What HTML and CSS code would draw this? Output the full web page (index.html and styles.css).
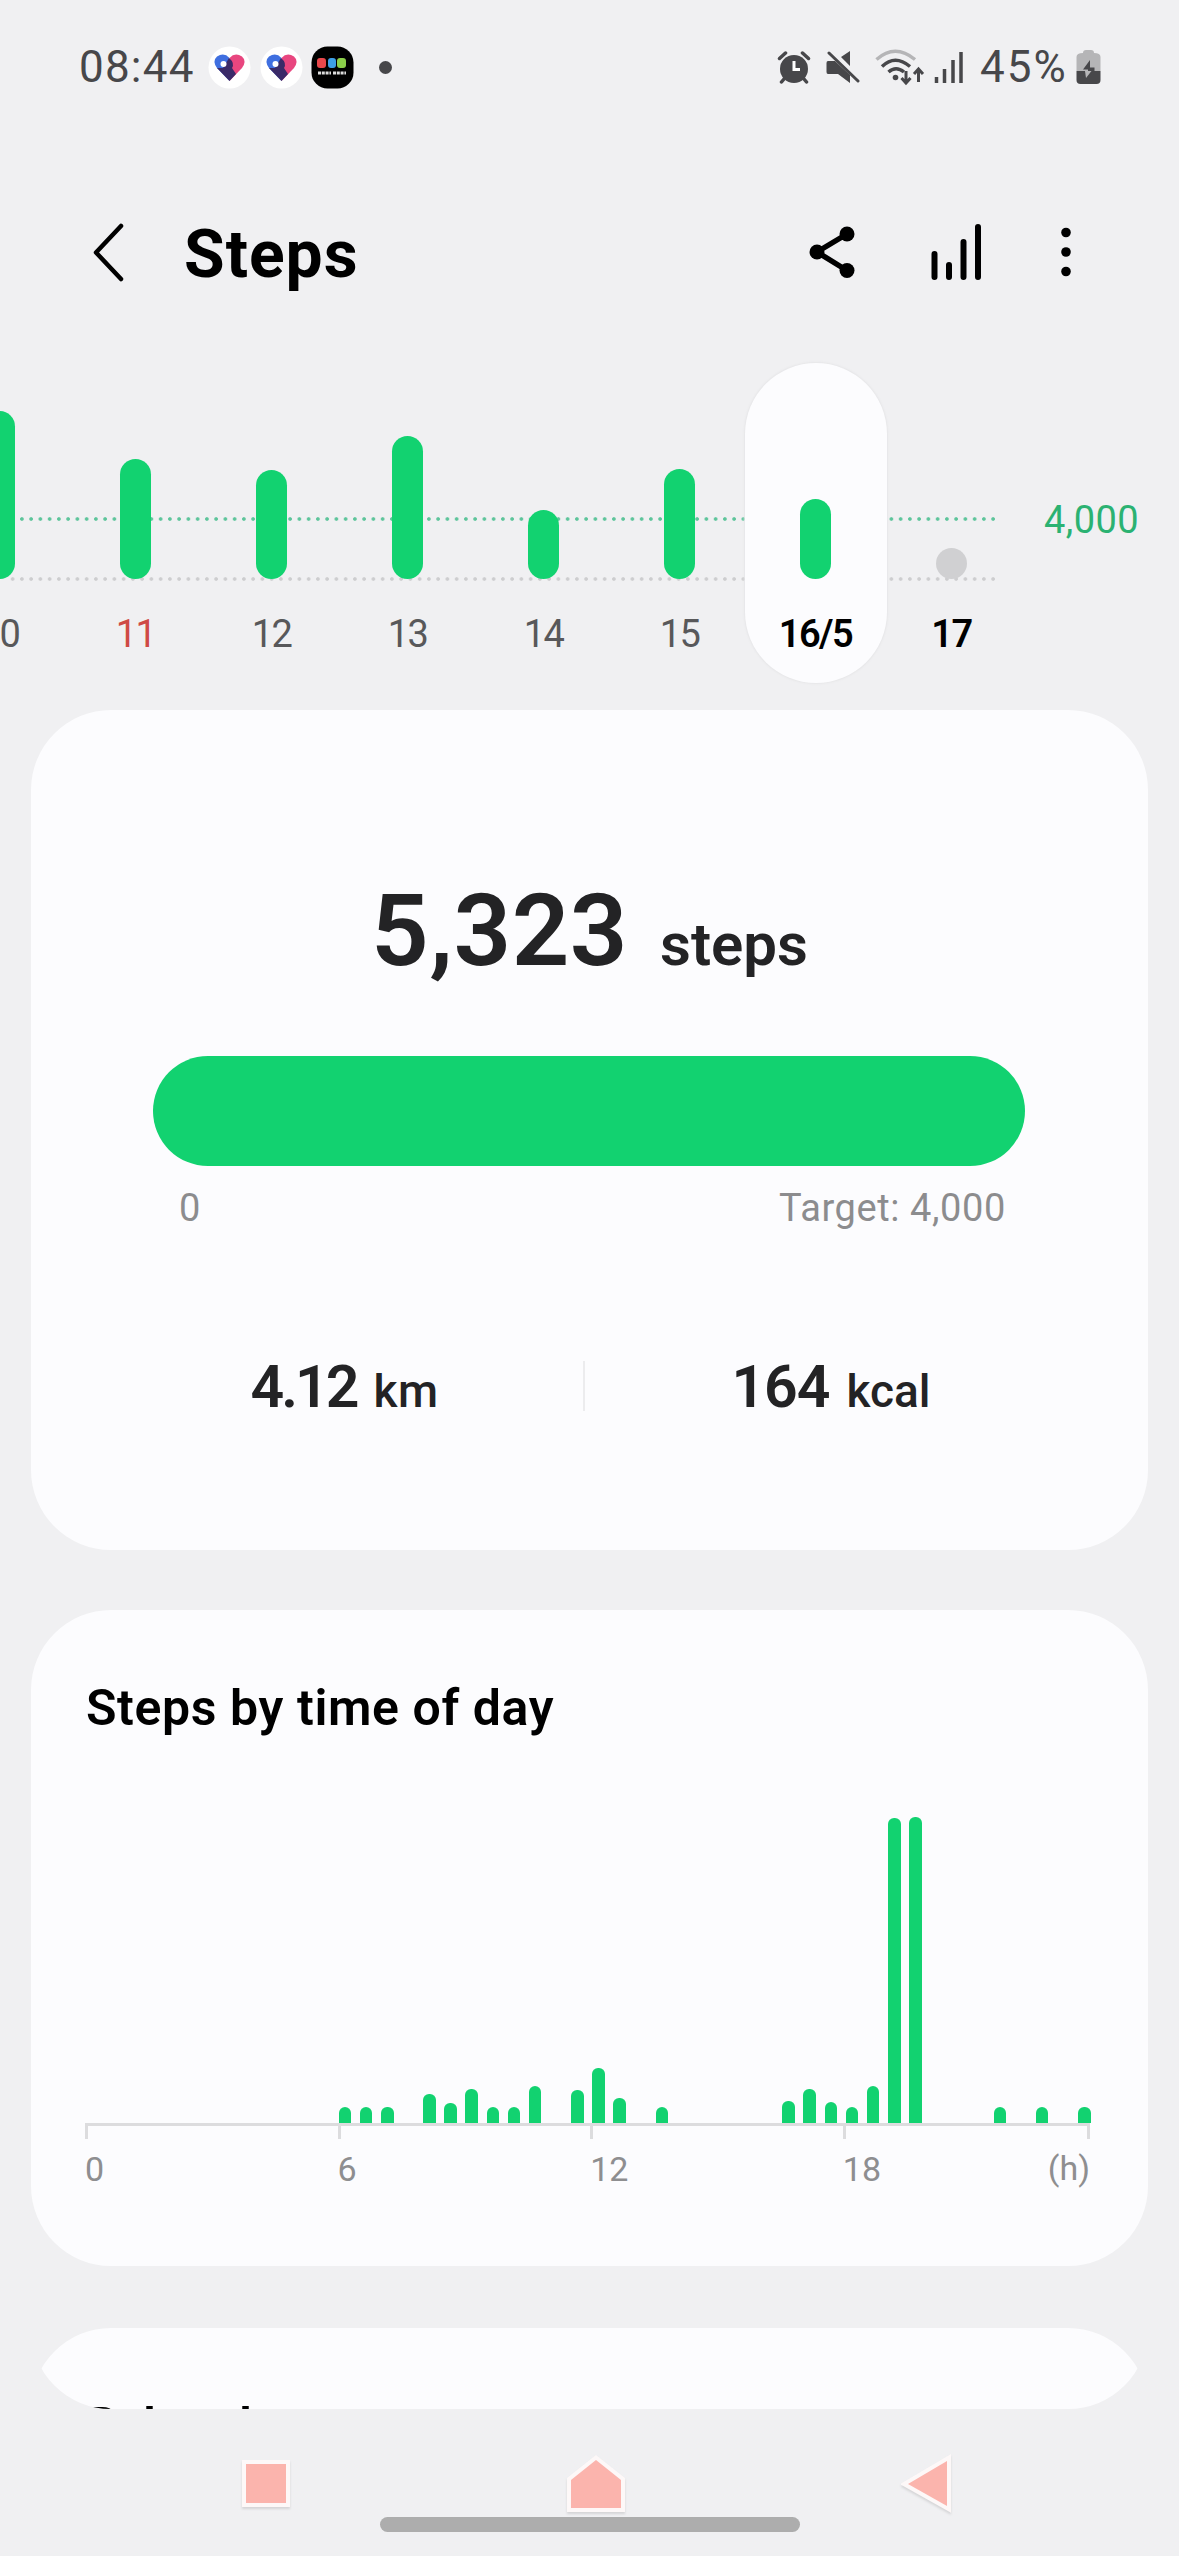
FILE: index.html
```html
<!DOCTYPE html>

<html lang="en">
	<head>
		<meta charset="utf-8" />
		<title>Steps</title>
		<link rel="stylesheet" href="styles.css">
	</head>

	<body>
		<div id="status">
			<span class="clock">08:44</span>
			<svg class="app" width="43" height="43" viewBox="0 0 43 43">
				<circle cx="21.5" cy="21.5" r="21" fill="#fff" />
				<path d="M21.500 35L9 22Q4 15 9 10.500Q16 6 21.500 12V35Z" fill="#3f6fe0" />
				<path d="M21.500 35L34 22Q39 15 34 10.500Q27 6 21.500 12V35Z" fill="#e8467f" />
				<path d="M9 22L15 22L21 12Q27 17 24 22L28 28L21.500 35Z" fill="#3a2a68" />
				<circle cx="15.5" cy="18" r="3" fill="#fff" />
			</svg>
			<svg class="app" width="43" height="43" viewBox="0 0 43 43">
				<circle cx="21.5" cy="21.5" r="21" fill="#fff" />
				<path d="M21.500 35L9 22Q4 15 9 10.500Q16 6 21.500 12V35Z" fill="#3f6fe0" />
				<path d="M21.500 35L34 22Q39 15 34 10.500Q27 6 21.500 12V35Z" fill="#e8467f" />
				<path d="M9 22L15 22L21 12Q27 17 24 22L28 28L21.500 35Z" fill="#3a2a68" />
				<circle cx="15.5" cy="18" r="3" fill="#fff" />
			</svg>
			<svg class="app" width="43" height="43" viewBox="0 0 43 43">
				<rect x="0.5" y="0.5" width="42" height="42" rx="16" fill="#000" />
				<rect x="6" y="12" width="9" height="10" rx="3" fill="#e8474b" />
				<rect x="17" y="12" width="8" height="10" rx="3" fill="#3d9fe6" />
				<rect x="26" y="12" width="9" height="10" rx="3" fill="#8bcf4a" />
				<path d="M7 27H20M22 27H35" stroke="#ddd" stroke-width="3" stroke-dasharray="3 0.800" />
			</svg>
			<span class="dot"></span>

			<div class="system">
				<svg width="34" height="34" viewBox="0 0 34 34">
					<circle cx="17" cy="19" r="14" fill="#47474a" />
					<path d="M2.500 8.500L8.500 3M25.500 3L31.500 8.500M7 29L4.500 32M27 29L29.500 32" stroke="#47474a" stroke-width="3.500" stroke-linecap="round" />
					<path d="M17 11V19.500H23" stroke="#fff" stroke-width="3" fill="none" />
				</svg>
				<svg class="mute" width="34" height="34" viewBox="0 0 34 34">
					<path d="M2 11H9L24 25V33L12 24H2Q0.500 24 0.500 22V13Q0.500 11 2 11ZM15 7L24 1V16Z" fill="#47474a" />
					<path d="M3 3L32 31" stroke="#47474a" stroke-width="3" stroke-linecap="round" />
				</svg>
				<svg class="wifi" width="50" height="38" viewBox="0 0 50 38">
					<g fill="none" stroke-width="3.500">
						<path d="M1.500 11.500Q20 -5 40 11.500" stroke="#b5b5b7" />
						<path d="M7 18.500Q20 6 35 18.500M13.500 24Q21 17.500 29 24" stroke="#47474a" />
						<path d="M31 23V34M26.500 30L31 35L35.500 30M43.500 34V21M39 26L43.500 21L48 26" stroke="#47474a" stroke-width="3" />
					</g>
					<circle cx="20.5" cy="29.5" r="2.800" fill="#47474a" />
				</svg>
				<svg class="signal" width="30" height="34" viewBox="0 0 30 34">
					<path d="M2.500 27V33M10.500 19V33M19 10V33M27 2V33" stroke="#47474a" stroke-width="3.500" />
				</svg>
				<span class="percent">45%</span>
				<svg class="battery" width="25" height="36" viewBox="0 0 25 36">
					<path d="M7 4Q7 1 10 1H15Q18 1 18 4Q24.500 4 24.500 8V22H0.500V8Q0.500 4 7 4Z" fill="#b5b5b7" />
					<path d="M0.500 22H24.500V31Q24.500 35 20.500 35H4.500Q0.500 35 0.500 31Z" fill="#47474a" />
					<path d="M14 11L7 20.500H12V22H18.500V18.500H14Z" fill="#47474a" />
					<path d="M10 29L15.500 22H9Z" fill="#b5b5b7" />
				</svg>
			</div>
		</div>

		<header>
			<svg width="32" height="62" viewBox="0 0 32 62">
				<path d="M29 5L4 31.500L29 58" fill="none" stroke="#000" stroke-width="4.500" stroke-linecap="round" stroke-linejoin="round" />
			</svg>
			<h1>Steps</h1>
			<svg class="share" width="48" height="54" viewBox="0 0 48 54">
				<path d="M39 9L9 27L39 45.500" fill="none" stroke="#000" stroke-width="5.500" />
				<circle cx="39" cy="9" r="7.500" />
				<circle cx="9" cy="27" r="7.500" />
				<circle cx="39" cy="45.500" r="7.500" />
			</svg>
			<svg class="trend" width="52" height="60" viewBox="0 0 52 60">
				<path d="M4.500 32V55M19 43V55M33.500 20V55M48 5V55" stroke="#000" stroke-width="6" stroke-linecap="round" />
			</svg>
			<svg class="more" width="12" height="50" viewBox="0 0 12 50">
				<circle cx="6" cy="5.500" r="4.800" />
				<circle cx="6" cy="25" r="4.800" />
				<circle cx="6" cy="44.500" r="4.800" />
			</svg>
		</header>

		<div id="week">
			<div class="line target"></div>
			<div class="line base"></div>
			<div class="day"><div class="bar" style="height: 168px"></div><p>10</p></div>
			<div class="day sunday"><div class="bar" style="height: 120px"></div><p>11</p></div>
			<div class="day"><div class="bar" style="height: 109px"></div><p>12</p></div>
			<div class="day"><div class="bar" style="height: 143px"></div><p>13</p></div>
			<div class="day"><div class="bar" style="height: 69px"></div><p>14</p></div>
			<div class="day"><div class="bar" style="height: 110px"></div><p>15</p></div>
			<div class="day selected"><div class="bar" style="height: 80px"></div><p>16/5</p></div>
			<div class="day today"><div class="bar empty" style="height: 31px"></div><p>17</p></div>
			<span class="goal">4,000</span>
		</div>

		<main>
			<section class="summary">
				<div class="count"><b>5,323</b><span>steps</span></div>
				<div class="progress"></div>
				<div class="range"><span>0</span><span>Target: 4,000</span></div>
				<div class="stats">
					<div class="km"><b>4.12</b><span>km</span></div>
					<div class="kcal"><b>164</b><span>kcal</span></div>
				</div>
			</section>

			<section class="hours">
				<h2>Steps by time of day</h2>
				<!-- one column for each half hour -->
				<div class="plot">
					<i style="grid-column: 13; height: 16px"></i>
					<i style="grid-column: 14; height: 16px"></i>
					<i style="grid-column: 15; height: 16px"></i>
					<i style="grid-column: 17; height: 29px"></i>
					<i style="grid-column: 18; height: 20px"></i>
					<i style="grid-column: 19; height: 34px"></i>
					<i style="grid-column: 20; height: 16px"></i>
					<i style="grid-column: 21; height: 16px"></i>
					<i style="grid-column: 22; height: 37px"></i>
					<i style="grid-column: 24; height: 33px"></i>
					<i style="grid-column: 25; height: 55px"></i>
					<i style="grid-column: 26; height: 25px"></i>
					<i style="grid-column: 28; height: 16px"></i>
					<i style="grid-column: 34; height: 22px"></i>
					<i style="grid-column: 35; height: 34px"></i>
					<i style="grid-column: 36; height: 21px"></i>
					<i style="grid-column: 37; height: 16px"></i>
					<i style="grid-column: 38; height: 37px"></i>
					<i style="grid-column: 39; height: 305px"></i>
					<i style="grid-column: 40; height: 306px"></i>
					<i style="grid-column: 44; height: 16px"></i>
					<i style="grid-column: 46; height: 16px"></i>
					<i style="grid-column: 48; height: 16px"></i>
				</div>
				<div class="axis">
					<span>0</span>
					<span>6</span>
					<span>12</span>
					<span class="last">18</span>
					<span class="unit">(h)</span>
				</div>
			</section>

			<section class="related">
				<h2>Related contents</h2>
			</section>
		</main>

		<footer>
			<svg class="recent" width="52" height="56" viewBox="0 0 52 56">
				<path d="M6 8H46V47H6Z" />
			</svg>
			<svg class="home" width="62" height="60" viewBox="0 0 62 60">
				<path d="M31 6L56 26V54H6V26Z" />
			</svg>
			<svg class="back" width="54" height="60" viewBox="0 0 54 60">
				<path d="M46 7V52L7 30Z" />
			</svg>
			<div class="gesture"></div>
		</footer>
	</body>

</html>
```

FILE: styles.css
```css
body{
	background-color: #f0f0f2;
	margin: 0;
	width: 1179px;
	height: 2556px;
	overflow: hidden;
	font-family: Roboto, "Liberation Sans", sans-serif;
	color: #232325;
}

svg{
	display: block;
	flex: none;
}

h1, h2, p{
	margin: 0;
}

/* status bar */
#status{
	display: flex;
	align-items: center;
	height: 134px;
	padding-left: 79px;
	padding-right: 78px;
	padding-bottom: 7px;
	color: #47474a;
	font-size: 44px;
}

.clock{
	width: 129px;
	font-weight: 400;
	letter-spacing: 1.200px;
}

.app{
	margin-right: 8.500px;
}

.dot{
	width: 13px;
	height: 13px;
	margin-left: 16px;
	border-radius: 50%;
	background-color: #47474a;
}

.system{
	display: flex;
	align-items: center;
	margin-left: auto;
}

.mute{
	margin-left: 15px;
}

.wifi{
	margin-left: 15px;
}

.signal{
	margin-left: 9px;
}

.percent{
	width: 96px;
	margin-left: 16px;
	font-weight: 400;
	letter-spacing: 2px;
}

/* title row */
header{
	display: flex;
	align-items: center;
	height: 222px;
	padding-left: 92px;
}

h1{
	width: 624px;
	margin-left: 60px;
	padding-top: 5px;
	color: #000;
	font-size: 66px;
	line-height: 80px;
	font-weight: 700;
	letter-spacing: 1px;
}

.trend{
	margin-left: 74px;
}

.more{
	margin-left: 78px;
}

/* daily bars */
#week{
	position: relative;
	display: flex;
	height: 320px;
	margin-left: -68.500px;
}

.line{
	position: absolute;
	left: 76px;
	width: 991px;
	height: 4px;
	background-image: radial-gradient(circle, #5cc49a 1.400px, transparent 2.200px);
	background-size: 9.260px 4px;
}

.line.target{
	top: 154px;
}

.line.base{
	top: 214px;
	background-image: radial-gradient(circle, #cdcdcf 1.400px, transparent 2.200px);
}

.day{
	position: relative;
	display: flex;
	flex-direction: column;
	align-items: center;
	justify-content: flex-end;
	flex: none;
	box-sizing: border-box;
	width: 136px;
	padding-bottom: 29px;
}

.bar{
	width: 31px;
	margin-bottom: 35px;
	border-radius: 16px;
	background-color: #12d270;
}

.bar.empty{
	background-color: #d0d0d2;
}

.day p{
	font-size: 38px;
	line-height: 40px;
	letter-spacing: -1.500px;
	color: #58585a;
}

.sunday p{
	color: #cf4a45;
}

.day.selected{
	width: 142px;
	margin: 0 -3px;
	border-radius: 71px;
	background-color: #fcfcfe;
	box-shadow: 0 0 2px 1px #e6e6e8;
}

.selected p, .today p{
	color: #000;
	font-weight: 600;
}

.goal{
	margin: 137px 0 0 24.500px;
	font-size: 38px;
	line-height: 40px;
	letter-spacing: 0.400px;
	color: #2bb272;
}

/* scrolling part, its corners cut the last card */
main{
	height: 1699px;
	margin: 27px 31px 0;
	overflow: hidden;
	border-radius: 0 0 80px 80px;
}

section{
	box-sizing: border-box;
	border-radius: 80px;
	background-color: #fcfcfe;
}

.summary{
	height: 840px;
	padding-top: 161px;
}

.count{
	display: flex;
	justify-content: center;
	align-items: baseline;
	height: 120px;
	line-height: 120px;
}

.count b{
	font-size: 101px;
	font-weight: 600;
	letter-spacing: 0.500px;
}

.count span{
	margin-left: 32px;
	font-size: 60px;
	font-weight: 600;
}

.progress{
	height: 110px;
	margin: 65px 123px 0 122px;
	border-radius: 55px;
	background-color: #12d270;
}

.range{
	display: flex;
	justify-content: space-between;
	margin: 22px 142px 0 148px;
	font-size: 38px;
	line-height: 40px;
	letter-spacing: 0.600px;
	color: #8c8c8e;
}

.stats{
	display: flex;
	height: 64px;
	margin: 129px 70px 0 74px;
	line-height: 60px;
	background: linear-gradient(#ececee, #ececee) 478px 4px / 2px 50px no-repeat;
}

.stats div{
	display: flex;
	justify-content: center;
	align-items: baseline;
}

.km{
	width: 479px;
}

.kcal{
	width: 494px;
}

.stats b{
	font-size: 59px;
	font-weight: 600;
	letter-spacing: -1px;
}

.stats .km b{
	letter-spacing: -3px;
}

.stats span{
	margin-left: 17px;
	font-size: 46px;
	font-weight: 500;
}

.km span{
	letter-spacing: 0.500px;
}

h2{
	color: #000;
	font-size: 50px;
	line-height: 60px;
	font-weight: 600;
	letter-spacing: 0.600px;
}

.hours{
	height: 656px;
	margin-top: 60px;
	padding: 68px 55px 0;
}

.plot{
	display: grid;
	grid-template-columns: repeat(48, 21.130px);
	align-items: end;
	height: 307px;
	margin-top: 78px;
}

.plot i{
	width: 12.600px;
	margin-left: -0.800px;
	border-radius: 6px 6px 0 0;
	background-color: #12d270;
}

.axis{
	display: flex;
	width: 1005px;
	margin-left: -1px;
	border-top: 3px solid #dcdcde;
	font-size: 34px;
	line-height: 40px;
	color: #8e8e90;
}

/* the left line of each label is its tick */
.axis span{
	width: 253.800px;
	padding-top: 23px;
	background: linear-gradient(#dcdcde, #dcdcde) 0 0 / 3px 13px no-repeat;
}

.axis .last{
	width: 206px;
}

.axis .unit{
	width: auto;
	flex: 1;
	padding-top: 22px;
	background-position: 100% 0;
	text-align: right;
}

.related{
	height: 300px;
	margin-top: 62px;
	padding: 68px 55px 0;
}

.related h2{
	letter-spacing: -0.800px;
}

/* navigation keys */
footer{
	position: relative;
	display: flex;
	height: 147px;
}

footer path{
	fill: #fbb4ad;
	stroke: #fdf8f8;
	stroke-width: 8px;
	paint-order: stroke;
}

footer svg{
	filter: drop-shadow(0 2px 1px #d4d4d6);
}

.recent{
	margin: 47px 0 0 240px;
}

.home{
	margin: 45px 0 0 273px;
}

.back{
	margin: 45px 0 0 274px;
}

.gesture{
	position: absolute;
	left: 380px;
	top: 108px;
	width: 420px;
	height: 15px;
	border-radius: 8px;
	background-color: #adadad;
}
```
